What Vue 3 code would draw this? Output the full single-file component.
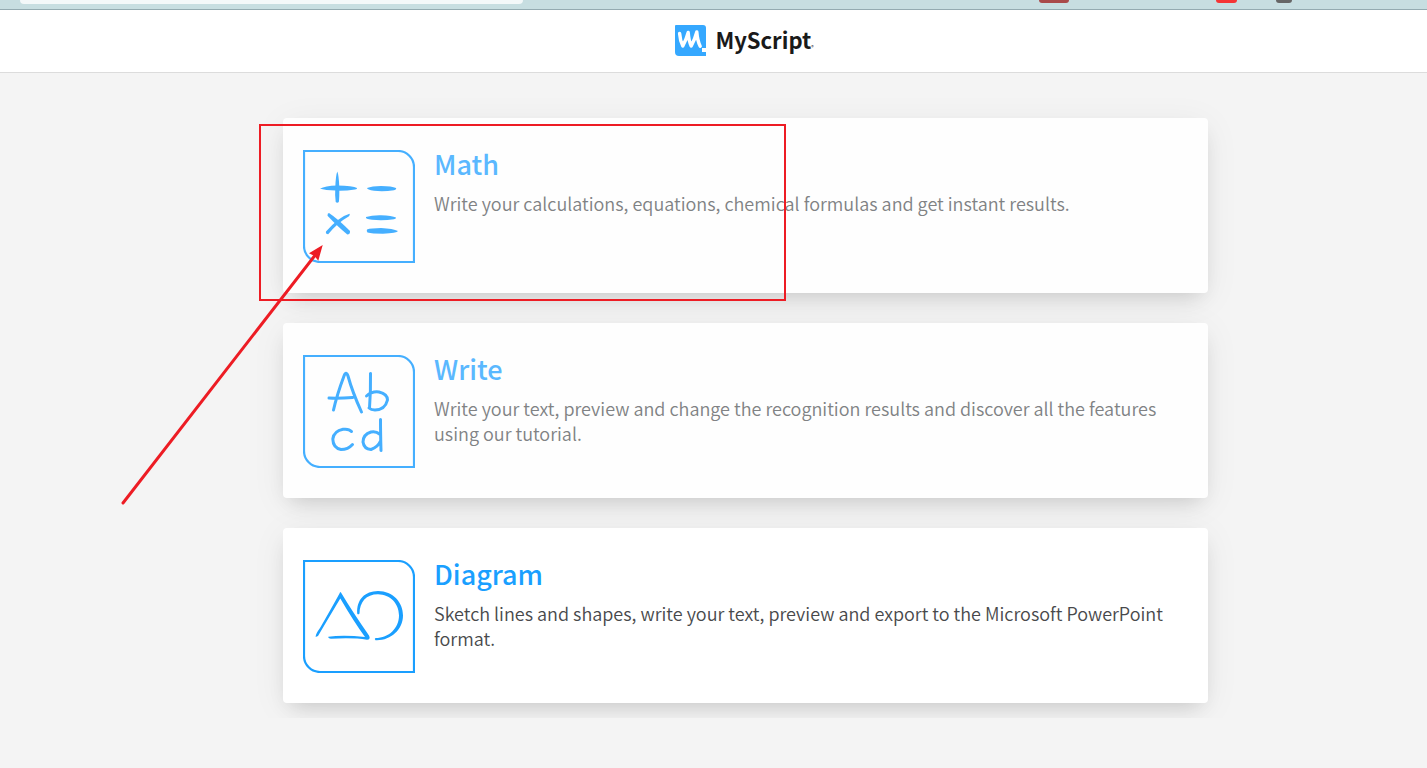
<script setup>
const cards = [
  { id: 'math', title: 'Math', visited: true, text: 'Write your calculations, equations, chemical formulas and get instant results.' },
  { id: 'write', title: 'Write', visited: true, text: 'Write your text, preview and change the recognition results and discover all the features using our tutorial.' },
  { id: 'diagram', title: 'Diagram', visited: false, text: 'Sketch lines and shapes, write your text, preview and export to the Microsoft PowerPoint format.' },
]
</script>

<template>
  <div class="page">
    <div class="browser">
      <span class="address"></span>
      <span class="tool maroon"></span>
      <span class="tool red"></span>
      <span class="tool grey"></span>
    </div>

    <header class="header">
      <a class="brand" href="#" aria-label="MyScript home">
        <svg class="mark" viewBox="0 0 31 31" aria-hidden="true">
          <path d="M1 0H28Q31 0 31 3V31H4Q0 31 0 27V1Q0 0 1 0Z" fill="#35a8ff" />
          <path d="M4.600 8.500Q5.200 16 7.800 21Q11.500 14 13.200 7.500Q13.800 16 16.200 21Q20 14 21.800 7Q22.500 16 25.200 21.300" fill="none" stroke="#fff" stroke-width="3.400" stroke-linecap="round" stroke-linejoin="round" />
          <path d="M27 23H31V27H27Z" fill="#fff" />
        </svg>
        <span class="name">MyScript</span><span class="reg">®</span>
      </a>
    </header>

    <main class="main">
      <div class="board">
        <div class="list">
          <a v-for="card in cards" :key="card.id" class="card" :class="{ visited: card.visited }" href="#">
            <svg class="icon" viewBox="0 0 112 113" aria-hidden="true">
              <path class="line" d="M1 1H95A16 16 0 0 1 111 17V112H17A16 16 0 0 1 1 96Z" stroke-width="2.200" />
              <g v-if="card.id === 'math'" class="fill">
                <path d="M34.3 21.5Q35.8 25 36.3 37Q36.5 48 35.8 52Q34.3 53.500 32.7 52Q31.8 45 32.3 37Q32.8 25 34.3 21.5Z" />
                <path d="M17 38.7Q22 36 34 35.6Q50 35.8 54 38Q54.5 39 52 39.5Q42 41 33 40.6Q22 40 17 38.7Z" />
                <path d="M64 38Q69 36 78 36Q89 36.2 93 38Q93.8 39.5 91 40.3Q80 42 71 40.8Q64 39.5 64 38Z" />
                <path d="M63 67Q69 65 78 65.2Q89 65.8 93 67.5Q93.5 68.8 91 69.2Q80 71 69 69.8Q62 69 63 67Z" />
                <path d="M64 79.5Q68 78 78 78Q90 78.6 95 81Q94 83 80 83.7Q69 83.7 64.5 82.5Q63.2 81 64 79.5Z" />
                <path d="M26 63Q35 69 47 81Q47.300 84.500 44.300 84.500Q35 77 24.500 65.800Q24.300 63.300 26 63Z" />
                <path d="M46.5 63.8Q36.500 66.500 23 81.500Q22.300 84 25.200 84.300Q34 73 46 66.200Q47.3 64.4 46.5 63.8Z" />
              </g>
              <g v-else-if="card.id === 'write'" class="line hand">
                <path d="M30.5 55C33 44 38 29 41 21Q43 15.500 45 21C48 32 53 45 58.500 57M26 43Q36 43.500 49.500 42.500" />
                <path d="M67.500 18.500Q67.800 36 66.500 53M63.500 41Q69 36 76 37Q84.500 39 84.500 45Q82 55 72 55Q68 55 66 53" />
                <path d="M48.500 76.500Q46 73.500 40 74.300Q31 76 29.800 84Q30 93 38 94.500Q45 94.500 49.500 89.500" />
                <path d="M76.500 79Q73 76 68 77Q60 79.500 60 87Q61 94 68 94.500Q75 92 77.500 86M77.500 64.500Q77.500 78 78 95.500" />
              </g>
              <g v-else class="fill">
                <path d="M12.600 77Q12.500 74 17 68Q28 49 36.500 33.500Q37.300 30.500 38.600 33.500Q49 51 66 75.500Q68 79.500 64 79.800Q50 77.500 28 78.800Q25 78.500 25.300 76.800Q40 74.500 62 77Q51 62 37.300 38.500Q28 54 15 76Z" />
                <path d="M54.200 53.500C53.500 39 62 31.300 75 31C90 31.300 100 42 100 55.500C100 70 87 81 72.500 80.200Q71 79 72.500 78C86 78 96 68 96 55.500C96 43 87 34.500 75 34.200C63 34.200 56.700 42 56.500 53.500Q55 55.200 54.200 53.500Z" />
              </g>
            </svg>
            <div class="body">
              <h2 class="title">{{ card.title }}</h2>
              <p class="text">{{ card.text }}</p>
            </div>
          </a>
        </div>
        <svg class="callout" viewBox="0 0 668 390" aria-hidden="true">
          <rect x="140" y="7" width="525" height="175" fill="none" stroke="#ed1c24" stroke-width="2" />
          <path d="M3 385L196 136" stroke="#ed1c24" stroke-width="3" stroke-linecap="round" />
          <path d="M202.700 127L189 135.300L194.500 138L198.300 142.700Z" fill="#ed1c24" />
        </svg>
      </div>
    </main>
  </div>
</template>

<style>
body {
  background: #f4f4f4;
}
</style>

<style scoped>
.page {
  min-height: 100vh;
  background: #f4f4f4;
  font-family: "Noto Sans CJK SC", "Noto Sans", sans-serif;
}
.browser {
  position: relative;
  height: 9px;
  background: #c7dee1;
  border-bottom: 1px solid #94abb1;
}
.address {
  display: block;
  width: 503px;
  height: 4px;
  margin-left: 20px;
  background: #f3f8f9;
  border-radius: 0 0 5px 5px;
}
.tool {
  position: absolute;
  top: 0;
  height: 3px;
  border-radius: 0 0 3px 3px;
}
.maroon { left: 1039px; width: 30px; background: #a94a4a; }
.red { left: 1216px; width: 21px; background: #f53535; }
.grey { left: 1276px; width: 16px; background: #666; }
.header {
  display: flex;
  justify-content: center;
  align-items: flex-start;
  height: 47px;
  padding: 15px 0 0 62px;
  background: #fff;
  border-bottom: 1px solid #dcdcdc;
}
.brand {
  display: flex;
  color: #1a1a1a;
  text-decoration: none;
}
.mark {
  width: 31px;
  height: 31px;
  margin-right: 9px;
}
.name {
  font-size: 22px;
  font-weight: 700;
  line-height: 29px;
}
.reg {
  font-size: 5px;
  line-height: 8px;
  margin-top: 18px;
}
.main {
  padding: 0 20px 50px 84px;
}
.board {
  position: relative;
  max-width: 925px;
  margin: 0 auto;
}
.list {
  display: flex;
  flex-direction: column;
  gap: 30px;
  margin: 0 -40px;
  padding: 45px 40px 15px;
  overflow: hidden;
}
.card {
  display: flex;
  gap: 19px;
  min-height: 121px;
  padding: 27px 20px;
  color: #48494b;
  background: #fff;
  border-radius: 4px;
  box-shadow: 0 10px 20px -8px rgba(0, 0, 0, 0.16), 0 6px 36px rgba(0, 0, 0, 0.06);
  text-decoration: none;
  --icon: #1a9fff;
  --title: #1a9fff;
}
.card.visited {
  color: #808284;
  background: #fefefe;
  --icon: #45afff;
  --title: #5ab8ff;
}
.icon {
  flex: none;
  width: 112px;
  height: 113px;
  margin-top: 5px;
}
.line {
  fill: none;
  stroke: var(--icon);
}
.hand {
  stroke-width: 3;
  stroke-linecap: round;
  stroke-linejoin: round;
}
.fill {
  fill: var(--icon);
}
.title {
  margin: 0 0 8px;
  color: var(--title);
  font-size: 27px;
  font-weight: 500;
  line-height: 38px;
}
.text {
  margin: 0;
  font-size: 18px;
  font-weight: 350;
  line-height: 25px;
}
.callout {
  position: absolute;
  top: 45px;
  left: -163px;
  width: 668px;
  height: 390px;
  pointer-events: none;
}
</style>
